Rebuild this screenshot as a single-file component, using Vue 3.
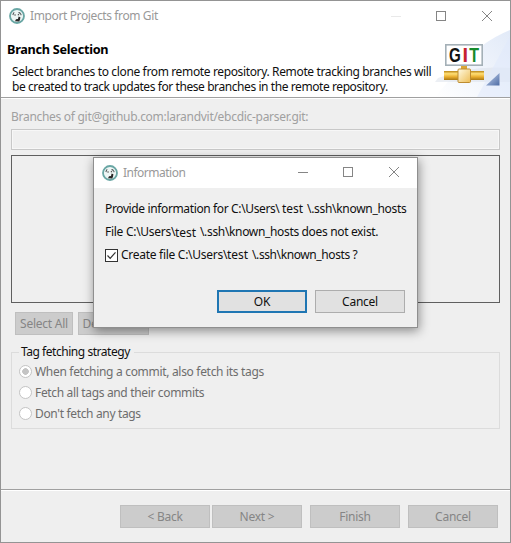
<script setup>
import { ref } from 'vue'

const createFile = ref(true)
const strategy = ref(0)
const strategies = [
  { label: 'When fetching a commit, also fetch its tags', cls: 's-commit' },
  { label: 'Fetch all tags and their commits', cls: 's-all' },
  { label: "Don't fetch any tags", cls: 's-none' },
]
const navButtons = [
  { label: '< Back', cls: 'n-back' },
  { label: 'Next >', cls: 'n-next' },
  { label: 'Finish', cls: 'n-finish' },
  { label: 'Cancel', cls: 'n-cancel' },
]
</script>

<template>
  <div class="window">
    <header class="titlebar">
      <svg class="app-icon" viewBox="0 0 16 16">
        <circle cx="8" cy="8" r="7" fill="#eef6f5" stroke="#69a6a4" stroke-width="1.8" />
        <path d="M3.4 6.8 4.2 4.6 5.6 4.2 5 5.6 4.3 7.2ZM9.4 4 11 4.3 12.6 6.5 12 7.8 11 5.8 9.6 5.2Z" fill="#4b5254" />
        <path d="M5.4 6.4h1.3v1.2H5.4zM8.8 6.2h1.3v1.1H8.8zM9.6 8.6 11.4 9.2 11 11.8 10.2 13.5 6 13.2 7 11.2 9 10.9Z" fill="#292727" />
      </svg>
      <span class="title t-main">Import Projects from Git</span>
      <svg class="controls" viewBox="0 0 120 16" fill="none" stroke="#858585">
        <path d="M4 8.5h10" stroke="#e9e9e9" />
        <rect x="49.5" y="3.5" width="9" height="9" />
        <path d="m95 3 10 10m0-10-10 10" />
      </svg>
    </header>

    <section class="banner">
      <div class="banner-text">
        <h1>Branch Selection</h1>
        <p class="t-desc1">Select branches to clone from remote repository. Remote tracking branches will</p>
        <p class="t-desc2">be created to track updates for these branches in the remote repository.</p>
      </div>
      <svg class="git-art" viewBox="0 0 75 67">
        <defs>
          <linearGradient id="sky" x1="0" y1="1" x2="1" y2="0">
            <stop offset="0" stop-color="#ffffff" />
            <stop offset="1" stop-color="#d5e1f5" />
          </linearGradient>
          <linearGradient id="pipe" x1="0" y1="0" x2="0" y2="1">
            <stop offset="0" stop-color="#b98516" />
            <stop offset=".3" stop-color="#ffdf75" />
            <stop offset=".65" stop-color="#e9ad2d" />
            <stop offset="1" stop-color="#a87816" />
          </linearGradient>
          <linearGradient id="node" x1="0" y1="0" x2="1" y2="1">
            <stop offset="0" stop-color="#fffbe4" />
            <stop offset="1" stop-color="#edbd55" />
          </linearGradient>
          <linearGradient id="corner" x1="0" y1="0" x2="1" y2="1">
            <stop offset="0" stop-color="#c5d4ee" />
            <stop offset="1" stop-color="#4e6ca5" />
          </linearGradient>
        </defs>
        <path d="M75 0Q43 13 25 39Q12 52 0 67H75Z" fill="url(#sky)" opacity=".7" />
        <path d="M75 38Q35 35 3 48L0 52H75Z" fill="#d9dfe9" opacity=".5" />
        <path d="M75 6Q61 32 42 67H75Z" fill="#e0eafb" opacity=".55" />
        <rect x="10.8" y="14.8" width="36.4" height="20.4" fill="#fff" stroke="#a4b0b7" stroke-width="1.6" />
        <g class="git-letters">
          <text x="14" y="32" textLength="11.8" lengthAdjust="spacingAndGlyphs" fill="#111">G</text>
          <text x="27.5" y="32" fill="#c52231">I</text>
          <text x="34.2" y="32" textLength="9.8" lengthAdjust="spacingAndGlyphs" fill="#168b2c">T</text>
        </g>
        <rect x="9" y="41" width="40" height="9" fill="url(#pipe)" />
        <path d="M26 36h6v4h-6z" fill="#dba636" />
        <rect x="23" y="39" width="12.5" height="13.5" rx="1" fill="url(#node)" stroke="#bd8c30" />
        <path d="M64.5 43v12.5H51Z" fill="url(#corner)" />
      </svg>
    </section>

    <main class="content">
      <div class="branches-label">Branches of git@github.com:larandvit/ebcdic-parser.git:</div>
      <div class="filter"></div>
      <div class="tree"></div>
      <div class="select-row">
        <button class="btn off select-all"><span>Select All</span></button>
        <button class="btn off deselect-all"><span>Deselect All</span></button>
      </div>
      <fieldset class="group">
        <legend>Tag fetching strategy</legend>
        <div v-for="(s, i) in strategies" :key="s.label" class="radio">
          <i class="dot" :class="{ on: strategy === i }"></i>
          <span :class="s.cls">{{ s.label }}</span>
        </div>
      </fieldset>
    </main>

    <footer class="footer">
      <button v-for="b in navButtons" :key="b.label" class="btn off nav" :class="b.cls">
        <span>{{ b.label }}</span>
      </button>
    </footer>

    <div class="dialog">
      <header class="dialog-title">
        <svg class="app-icon" viewBox="0 0 16 16">
          <circle cx="8" cy="8" r="7" fill="#eef6f5" stroke="#69a6a4" stroke-width="1.8" />
          <path d="M3.4 6.8 4.2 4.6 5.6 4.2 5 5.6 4.3 7.2ZM9.4 4 11 4.3 12.6 6.5 12 7.8 11 5.8 9.6 5.2Z" fill="#4b5254" />
          <path d="M5.4 6.4h1.3v1.2H5.4zM8.8 6.2h1.3v1.1H8.8zM9.6 8.6 11.4 9.2 11 11.8 10.2 13.5 6 13.2 7 11.2 9 10.9Z" fill="#292727" />
        </svg>
        <span class="title t-info">Information</span>
        <svg class="controls" viewBox="0 0 120 16" fill="none" stroke="#858585">
          <path d="M4 7.5h10" />
          <rect x="49.5" y="2.5" width="9" height="9" />
          <path d="m95 2 10 10m0-10-10 10" />
        </svg>
      </header>
      <div class="dialog-body">
        <div class="line"><span class="d-a">Provide information for C:\Users\</span><span class="user">test</span><span class="d-b">\.ssh\known_hosts</span></div>
        <div class="line"><span class="d-c">File C:\Users\</span><span class="user low">test</span><span class="d-d">\.ssh\known_hosts does not exist.</span></div>
        <div class="line" @click="createFile = !createFile">
          <svg class="check" viewBox="0 0 13 13" fill="none">
            <rect x=".5" y=".5" width="12" height="12" fill="#fff" stroke="#333" />
            <path v-if="createFile" d="m2.5 6.5 2.7 2.8 5.3-6" stroke="#333" stroke-width="1.2" />
          </svg>
          <span class="d-e">Create file C:\Users\</span><span class="user">test</span><span class="d-f">\.ssh\known_hosts ?</span>
        </div>
      </div>
      <div class="dialog-actions">
        <button class="btn ok"><span>OK</span></button>
        <button class="btn"><span>Cancel</span></button>
      </div>
    </div>
  </div>
</template>

<style>
body {
  margin: 0;
  background: #efefef;
}
</style>

<style scoped>
* {
  box-sizing: border-box;
}
.window {
  position: relative;
  display: flex;
  flex-direction: column;
  width: 511px;
  height: 543px;
  overflow: hidden;
  border: 1px solid #949494;
  background: #efefef;
  font: 12px/16px "Noto Sans", sans-serif;
  letter-spacing: -0.34px;
  color: #101010;
  white-space: nowrap;
}
.titlebar {
  display: flex;
  align-items: center;
  height: 29px;
  padding-left: 8px;
  background: #fff;
}
.app-icon {
  width: 16px;
  height: 16px;
  flex: none;
}
.title {
  margin-left: 5px;
  color: #999;
}
.t-main {
  letter-spacing: -0.38px;
}
.t-info {
  letter-spacing: -0.5px;
}
.controls {
  width: 120px;
  height: 16px;
  margin-left: auto;
  margin-right: 3px;
}
.banner {
  display: flex;
  justify-content: space-between;
  height: 69px;
  background: #fff;
  border-bottom: 1px solid #fff;
  box-shadow: inset 0 -1px #a0a0a0;
}
.banner-text {
  padding: 11px 0 0 6px;
}
h1 {
  margin: 0 0 7px;
  font-size: 12.7px;
  line-height: 16px;
  letter-spacing: -0.28px;
  color: #000;
}
p {
  margin: 0 0 0 5px;
  line-height: 15px;
}
.t-desc1 {
  letter-spacing: -0.36px;
}
.t-desc2 {
  letter-spacing: -0.42px;
}
.git-art {
  flex: none;
  width: 75px;
  height: 67px;
}
.git-letters {
  font: bold 20px "Liberation Sans", sans-serif;
  letter-spacing: 0;
}
.content {
  display: flex;
  flex-direction: column;
  flex: 1;
  padding: 10px 10px 0;
}
.branches-label {
  height: 20px;
  letter-spacing: -0.29px;
  color: #a0a0a0;
}
.filter {
  height: 21px;
  margin-bottom: 5px;
  border: 1px solid #c8c8c8;
  box-shadow: inset 0 0 0 1px #f7f7f7;
}
.tree {
  height: 148px;
  border: 1px solid #5f5f5f;
}
.select-row {
  display: flex;
  gap: 5px;
  padding: 9px 4px 0;
}
.btn {
  display: flex;
  align-items: center;
  justify-content: center;
  width: 90px;
  height: 23px;
  padding: 0;
  border: 1px solid #adadad;
  background: #e1e1e1;
  font: inherit;
  letter-spacing: -0.25px;
  color: #101010;
}
.off {
  border-color: #bfbfbf;
  background: #cccccc;
  color: #858585;
}
.select-all {
  width: 58px;
}
.deselect-all {
  width: 71px;
}
.group {
  height: 86px;
  margin: 8px 0 0;
  padding: 0 0 0 7px;
  border: 1px solid #dcdcdc;
}
.group legend {
  width: 115px;
  padding: 0 0 0 2px;
  line-height: 18px;
  letter-spacing: -0.46px;
}
.radio {
  display: flex;
  align-items: center;
  gap: 3px;
  height: 21px;
  color: #6d6d6d;
}
.s-commit {
  letter-spacing: -0.31px;
}
.dot {
  width: 13px;
  height: 13px;
  border: 1px solid #c4c4c4;
  border-radius: 50%;
  background: #fff;
}
.dot.on {
  background: radial-gradient(circle, #c4c4c4 0 3px, #fff 3.6px);
}
.footer {
  display: flex;
  height: 53px;
  padding: 15px 0 0 119px;
  border-top: 1px solid #a0a0a0;
  box-shadow: inset 0 1px #fff;
}
.nav {
  margin-right: 2px;
}
.n-next,
.n-finish {
  margin-right: 8px;
}
.dialog {
  position: absolute;
  left: 92px;
  top: 156px;
  width: 325px;
  height: 171px;
  border: 1px solid #8f8f8f;
  background: #efefef;
  box-shadow: 1px 3px 10px rgba(0, 0, 0, 0.42);
}
.dialog-title {
  display: flex;
  align-items: center;
  height: 30px;
  padding-left: 8px;
  background: #fff;
}
.dialog-body {
  padding: 13px 0 0 11px;
}
.line {
  display: flex;
  height: 23px;
}
.d-a {
  width: 177px;
  letter-spacing: -0.37px;
}
.d-b {
  letter-spacing: -0.3px;
}
.d-c {
  width: 70px;
  letter-spacing: -0.28px;
}
.d-d {
  letter-spacing: -0.34px;
}
.d-e {
  width: 106px;
  letter-spacing: -0.28px;
}
.d-f {
  letter-spacing: -0.4px;
}
.user {
  width: 25px;
  letter-spacing: 0;
}
.low {
  padding-top: 1px;
}
.check {
  width: 13px;
  height: 13px;
  margin: 2px 3px 0 0;
}
.dialog-actions {
  display: flex;
  justify-content: flex-end;
  gap: 8px;
  padding: 20px 12px 0 0;
}
.ok {
  border: 2px solid #1f76b3;
}
</style>
